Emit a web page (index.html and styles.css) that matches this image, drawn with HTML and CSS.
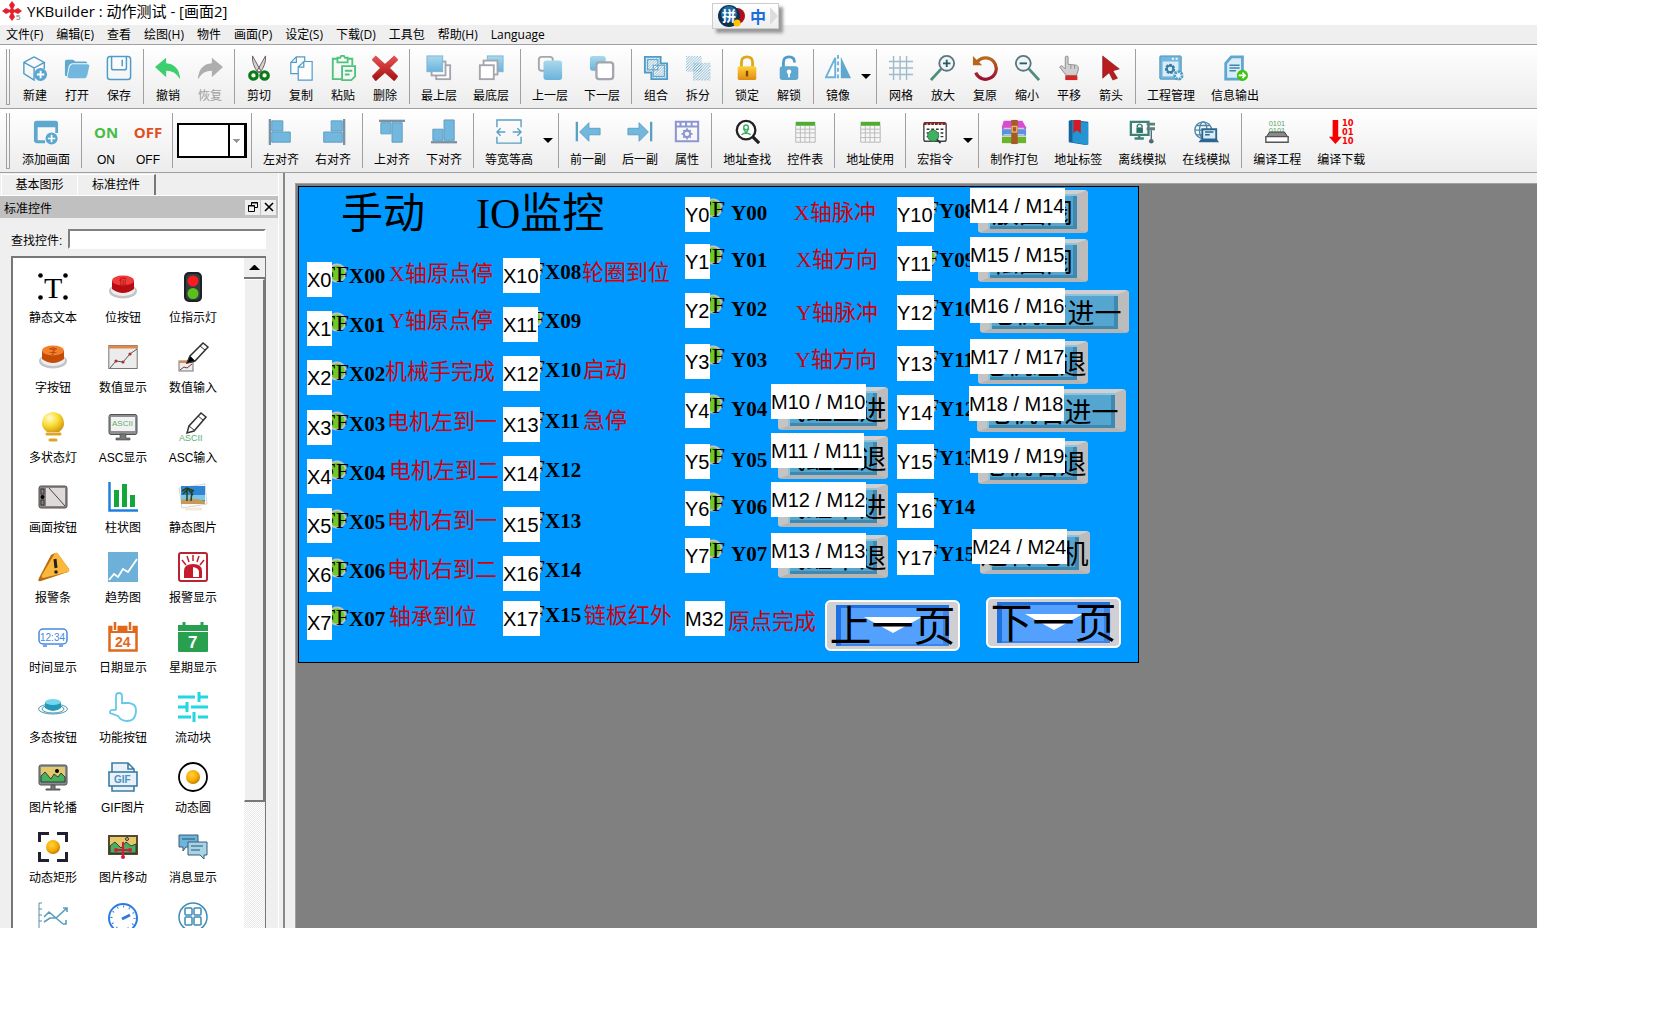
FILE: index.html
```html
<!DOCTYPE html>
<html lang="zh-CN">
<head>
    <meta charset="UTF-8">
    <meta name="viewport" content="width=device-width, initial-scale=1.0">
    <title>YKBuilder : 动作测试 - [画面2]</title>
    <link rel="stylesheet" href="styles.css">
</head>
<body>
    <!-- shared gradients for the icons -->
    <svg class="defs" width="0" height="0" aria-hidden="true">
        <defs>
            <linearGradient id="gBlue" x1="0" y1="0" x2="0" y2="1"><stop offset="0" stop-color="#a9d9ec"/><stop offset="1" stop-color="#6ab2dc"/></linearGradient>
            <linearGradient id="gGold" x1="0" y1="0" x2="0" y2="1"><stop offset="0" stop-color="#ffd23c"/><stop offset="1" stop-color="#e08a10"/></linearGradient>
            <linearGradient id="gRed" x1="0" y1="0" x2="0" y2="1"><stop offset="0" stop-color="#ee5050"/><stop offset="1" stop-color="#a01010"/></linearGradient>
            <linearGradient id="gUndo" x1="0" y1="0" x2="0" y2="1"><stop offset="0" stop-color="#b86a1c"/><stop offset="1" stop-color="#9a1030"/></linearGradient>
            <radialGradient id="gBall" cx=".4" cy=".35" r=".7"><stop offset="0" stop-color="#ffd040"/><stop offset=".6" stop-color="#f8ac00"/><stop offset="1" stop-color="#b87400"/></radialGradient>
            <radialGradient id="gBulb" cx=".35" cy=".3" r=".8"><stop offset="0" stop-color="#fffbd0"/><stop offset=".5" stop-color="#f8dc30"/><stop offset="1" stop-color="#d09010"/></radialGradient>
            <pattern id="hatch" width="3" height="3" patternUnits="userSpaceOnUse"><path d="M0 3L3 0" stroke="#5a9fc4" stroke-width=".8"/></pattern>
        </defs>
    </svg>

    <div class="app">
        <header class="titlebar">
            <svg width="20" height="20" viewBox="0 0 20 20"><g fill="#e8202c"><path d="M10 0l3 4-2 4H9L7 4zM10 20l3-4-2-4H9l-2 4zM0 10l4-3 4 2v2l-4 2zM20 10l-4-3-4 2v2l4 2z"/><circle cx="10" cy="10" r="2.500"/></g><text x="14" y="19" font-size="8" fill="#777">5</text></svg>
            <h1>YKBuilder : 动作测试 - [画面2]</h1>
            <div class="ime">
                <svg width="28" height="24" viewBox="0 0 28 24"><circle cx="19" cy="12" r="8" fill="#b00c1c"/><circle cx="11" cy="12" r="11" fill="#12304e"/><circle cx="11" cy="10" r="8" fill="#1d6ca4"/><text x="4" y="17" font-size="14" font-weight="bold" fill="#fff">拼</text><circle cx="19" cy="19" r="3.500" fill="#ffc400"/></svg>
                <span class="ime-mode">中</span>
                <span class="ime-end"></span>
            </div>
        </header>

        <nav class="menubar">
            <a href="#">文件(F)</a>
            <a href="#">编辑(E)</a>
            <a href="#">查看</a>
            <a href="#">绘图(H)</a>
            <a href="#">物件</a>
            <a href="#">画面(P)</a>
            <a href="#">设定(S)</a>
            <a href="#">下载(D)</a>
            <a href="#">工具包</a>
            <a href="#">帮助(H)</a>
            <a href="#">Language</a>
        </nav>

        <div class="toolbar">
            <span class="grip"></span>
            <button class="tool"><svg viewBox="0 0 28 28"><g fill="none" stroke="#4f9cc8" stroke-width="1.500"><path d="M13 2L2 8v12l11 7V14L2 8M13 14l11-6L13 2M24 8v7"/></g><circle cx="20" cy="21" r="7" fill="#5aa6d0"/><path d="M20 17v8M16 21h8" stroke="#fff" stroke-width="2"/></svg>新建</button>
            <button class="tool"><svg viewBox="0 0 28 28"><path d="M1 7q0-2 2-2h7l2 2h11q2 0 2 2H9q-3 0-4 3L3 23q-2 0-2-2z" fill="#5ea7cf"/><path d="M9 10h16q3 0 2 3l-2 9q-1 3-3 3H6q-3 0-2-3l2-9q1-3 3-3z" fill="#72b7de"/></svg>打开</button>
            <button class="tool"><svg viewBox="0 0 28 28"><g fill="none" stroke="#4f9cc8" stroke-width="1.600"><rect x="1.500" y="1.500" width="25" height="25" rx="3"/><path d="M6 2v12q0 2 2 2h12q2 0 2-2V2M17.500 5v7"/></g></svg>保存</button>
            <span class="sep"></span>
            <button class="tool"><svg viewBox="0 0 28 28"><path d="M0 13L12 3v6q14 1 15 17Q22 17 12 17v7z" fill="#3ccf70"/></svg>撤销</button>
            <button class="tool" disabled><svg viewBox="0 0 28 28"><path d="M28 13L16 3v6Q2 10 1 26 6 17 16 17v7z" fill="#aeaeae"/></svg>恢复</button>
            <span class="sep"></span>
            <button class="tool"><svg viewBox="0 0 28 28"><path d="M7 1l9 16-3 2Q6 10 7 1zM21 1l-9 16 3 2q7-9 6-18z" fill="#d8d0d0" stroke="#665a5a"/><g fill="none" stroke="#0c7a18" stroke-width="3.400"><circle cx="8" cy="22" r="4"/><circle cx="20" cy="22" r="4"/></g></svg>剪切</button>
            <button class="tool"><svg viewBox="0 0 28 28"><g fill="#fbfdfe" stroke="#4f9cc8" stroke-width="1.300"><path d="M9 2h9v18H3V8zM9 2v6H3"/><path d="M17 7h9v20H11V13zM17 7v6h-6"/></g></svg>复制</button>
            <button class="tool"><svg viewBox="0 0 28 28"><g fill="none" stroke="#4dc47a" stroke-width="2"><path d="M8 4H3v22h9M19 4h5v7M8 3h3l1-2h3l1 2h3v5H8z"/><path d="M13 12h14v11l-4 4H13zM16 17h8M16 21h5"/></g></svg>粘贴</button>
            <button class="tool"><svg viewBox="0 0 28 28"><path d="M4 1l10 9L24 1l4 4-9 9 9 9-4 5-10-9-10 9-4-5 9-9-9-9z" fill="url(#gRed)" stroke="#a82020" stroke-width=".6"/></svg>删除</button>
            <span class="sep"></span>
            <button class="tool"><svg viewBox="0 0 28 28"><g fill="#fff" stroke="#a5a5ad" stroke-width="2"><rect x="11" y="11" width="15" height="15"/><rect x="6" y="7" width="15" height="15"/></g><rect x="1" y="1" width="17" height="17" fill="url(#gBlue)" stroke="#7ab6d6"/></svg>最上层</button>
            <button class="tool"><svg viewBox="0 0 28 28"><rect x="10" y="1" width="17" height="17" fill="url(#gBlue)" stroke="#7ab6d6"/><g fill="#fff" stroke="#a5a5ad" stroke-width="2"><rect x="6" y="6" width="15" height="15"/><rect x="2" y="11" width="15" height="15"/></g></svg>最底层</button>
            <span class="sep"></span>
            <button class="tool"><svg viewBox="0 0 28 28"><rect x="2" y="2" width="15" height="15" rx="3" fill="none" stroke="#a5a5ad" stroke-width="2"/><rect x="7" y="6" width="20" height="21" rx="3" fill="url(#gBlue)"/></svg>上一层</button>
            <button class="tool"><svg viewBox="0 0 28 28"><rect x="1" y="1" width="17" height="16" rx="3" fill="url(#gBlue)"/><rect x="8" y="8" width="18" height="18" rx="3" fill="#fff" stroke="#a5a5ad" stroke-width="2.500"/></svg>下一层</button>
            <span class="sep"></span>
            <button class="tool"><svg viewBox="0 0 28 28"><path d="M2 2h17v7h7v17H9v-7H2z" fill="url(#hatch)" stroke="#4f9cc8" stroke-width="2"/><rect x="5" y="5" width="11" height="11" fill="none" stroke="#4f9cc8"/><rect x="11" y="11" width="12" height="12" fill="none" stroke="#4f9cc8"/></svg>组合</button>
            <button class="tool"><svg viewBox="0 0 28 28"><path d="M1 1h17v17H1z" fill="url(#hatch)"/><path d="M9 9h18v18H9z" fill="url(#hatch)" stroke="#a9ccdf" stroke-dasharray="2 2"/></svg>拆分</button>
            <span class="sep"></span>
            <button class="tool"><svg viewBox="0 0 28 28"><path d="M8 13V8q0-6 6-6t6 6v5" fill="none" stroke="#e0a818" stroke-width="3"/><rect x="4" y="12" width="20" height="15" rx="2" fill="url(#gGold)"/><path d="M14 17v6" stroke="#7a4800" stroke-width="2.500"/></svg>锁定</button>
            <button class="tool"><svg viewBox="0 0 28 28"><path d="M8 13V8q0-6 6-6t6 6" fill="none" stroke="#4f9cc8" stroke-width="3"/><rect x="4" y="12" width="20" height="15" rx="3" fill="#5ea7cf"/><circle cx="14" cy="18" r="2.500" fill="#fff"/><path d="M14 18v6" stroke="#fff" stroke-width="2"/></svg>解锁</button>
            <span class="sep"></span>
            <button class="tool"><svg viewBox="0 0 28 28"><path d="M11 3v21H1z" fill="#fff" stroke="#6ab2dc" stroke-width="2"/><path d="M17 2v23h11z" fill="#5ea7cf"/><path d="M14 0v28" stroke="#6ab2dc" stroke-width="2" stroke-dasharray="4 3"/></svg>镜像</button>
            <button class="drop" aria-label="镜像选项"></button>
            <span class="sep"></span>
            <button class="tool"><svg viewBox="0 0 28 28"><path d="M6 1v26M13 1v26M20 1v26M1 7h26M1 14h26M1 21h26" stroke="#9dbccb" stroke-width="1.500"/></svg>网格</button>
            <button class="tool"><svg viewBox="0 0 28 28"><path d="M1 27l11-12" stroke="#4f8d7d" stroke-width="3"/><circle cx="18" cy="9" r="8" fill="#eef6f8" stroke="#5a7482" stroke-width="2"/><path d="M18 5v8M14 9h8" stroke="#2d5a5a" stroke-width="2"/></svg>放大</button>
            <button class="tool"><svg viewBox="0 0 28 28"><path d="M6 7A11.500 11.500 0 1 1 4 19" fill="none" stroke="url(#gUndo)" stroke-width="3.500"/><path d="M1 1v10h10z" fill="#b8661c"/></svg>复原</button>
            <button class="tool"><svg viewBox="0 0 28 28"><path d="M27 27L16 15" stroke="#4f8d7d" stroke-width="3"/><circle cx="10" cy="9" r="8" fill="#eef6f8" stroke="#5a7482" stroke-width="2"/><path d="M6 9h8" stroke="#2d5a5a" stroke-width="2"/></svg>缩小</button>
            <button class="tool"><svg viewBox="0 0 28 28"><path d="M10 2q2-2 3 0v8l9 1q3 1 2 5l-2 6H11L4 13q1-2 3-1l3 3z" fill="#cfcfcf" stroke="#8a8a8a"/><path d="M16 11v4M20 11v4" stroke="#8a8a8a"/><rect x="10" y="22" width="13" height="5" fill="#d42828"/></svg>平移</button>
            <button class="tool"><svg viewBox="0 0 28 28"><path d="M5 1l18 14-7 2 5 8-5 2-4-8-7 6z" fill="#b81c1c" stroke="#7a1010" stroke-width=".6"/></svg>箭头</button>
            <span class="sep"></span>
            <button class="tool"><svg viewBox="0 0 28 28"><rect x="2" y="1" width="23" height="25" rx="1" fill="#72b7de" stroke="#4f8fb4"/><rect x="5" y="7" width="17" height="16" fill="#d8edf7"/><circle cx="13" cy="15" r="4" fill="none" stroke="#3b7ca4" stroke-width="3" stroke-dasharray="2.500 1"/><circle cx="13" cy="15" r="3.500" fill="none" stroke="#3b7ca4" stroke-width="2"/><circle cx="22" cy="22" r="4" fill="#e8f4fa" stroke="#4f9cc8" stroke-width="3" stroke-dasharray="2.500 1"/><path d="M15 4h2M19 4h2" stroke="#fff" stroke-width="2"/></svg>工程管理</button>
            <button class="tool"><svg viewBox="0 0 28 28"><path d="M10 2h12v24H4V9z" fill="#d8edf7" stroke="#5ea7cf" stroke-width="3"/><path d="M8 11h11M8 14h11M8 17h7" stroke="#4584ac" stroke-width="1.500"/><circle cx="22" cy="22" r="6" fill="#3fc410"/><path d="M18 22h7M22 19l3 3-3 3" fill="none" stroke="#fff" stroke-width="1.800"/></svg>信息输出</button>
        </div>

        <div class="toolbar">
            <span class="grip"></span>
            <button class="tool"><svg viewBox="0 0 28 28"><path d="M1 5q0-3 3-3h20q3 0 3 3v10h-3V9H5v14h8v3H4q-3 0-3-3z" fill="#5ea7cf"/><circle cx="20" cy="21" r="6.500" fill="#5aa6d0"/><path d="M20 17v8M16 21h8" stroke="#fff" stroke-width="1.800"/></svg>添加画面</button>
            <span class="sep"></span>
            <button class="tool"><b class="word on">ON</b>ON</button>
            <button class="tool"><b class="word off">OFF</b>OFF</button>
            <span class="sep"></span>
            <select class="state" aria-label="状态"><option></option></select>
            <span class="sep"></span>
            <button class="tool"><svg viewBox="0 0 28 28"><path d="M2 0v28" stroke="#7a93a3" stroke-width="2.500"/><path d="M4 2h12v11H4zM4 14h20v11H4z" fill="#72b7de" stroke="#5f9cc0"/></svg>左对齐</button>
            <button class="tool"><svg viewBox="0 0 28 28"><path d="M26 0v28" stroke="#7a93a3" stroke-width="2.500"/><path d="M12 2h12v11H12zM4 14h20v11H4z" fill="#72b7de" stroke="#5f9cc0"/></svg>右对齐</button>
            <span class="sep"></span>
            <button class="tool"><svg viewBox="0 0 28 28"><path d="M0 2h28" stroke="#7a93a3" stroke-width="2.500"/><path d="M2 4h11v12H2zM14 4h11v21H14z" fill="#72b7de" stroke="#5f9cc0"/></svg>上对齐</button>
            <button class="tool"><svg viewBox="0 0 28 28"><path d="M0 25h28" stroke="#7a93a3" stroke-width="2.500"/><path d="M2 11h11v12H2zM14 1h11v22H14z" fill="#72b7de" stroke="#5f9cc0"/></svg>下对齐</button>
            <span class="sep"></span>
            <button class="tool"><svg viewBox="0 0 28 28"><g fill="none" stroke="#5a9fc4" stroke-width="1.500"><path d="M1 9V1h26v8M1 19v7h26v-7M1 14h9M18 14h9M5 10l-4 4 4 4M23 10l4 4-4 4"/></g></svg>等宽等高</button>
            <button class="drop" aria-label="等宽等高选项"></button>
            <span class="sep"></span>
            <button class="tool"><svg viewBox="0 0 28 28"><path d="M2 3v21" stroke="#5a9fc4" stroke-width="2.500"/><path d="M5 14l10-10v6h12v7H15v7z" fill="#72b7de" stroke="#5a9fc4"/></svg>前一副</button>
            <button class="tool"><svg viewBox="0 0 28 28"><path d="M26 3v21" stroke="#5a9fc4" stroke-width="2.500"/><path d="M23 14L13 4v6H1v7h12v7z" fill="#72b7de" stroke="#5a9fc4"/></svg>后一副</button>
            <button class="tool"><svg viewBox="0 0 28 28"><g fill="none" stroke="#8d96cf" stroke-width="2.200"><path d="M2 3h24v21H2zM2 8h24M7 3v5M13 3v5M19 3v5"/><circle cx="14" cy="16" r="3.500"/><path d="M14 10v3M14 19v3M8 16h3M17 16h3M10 12l2 2M18 20l-2-2M18 12l-2 2M10 20l2-2" stroke-width="1.800"/></g></svg>属性</button>
            <span class="sep"></span>
            <button class="tool"><svg viewBox="0 0 28 28"><circle cx="13" cy="12" r="10" fill="#fff" stroke="#222" stroke-width="2.500"/><path d="M20 19l7 7" stroke="#222" stroke-width="3.500"/><circle cx="13" cy="9" r="2.500" fill="none" stroke="#3fae62" stroke-width="1.500"/><path d="M10 10l3 5 3-5M8 17q5-4 10 0" fill="none" stroke="#3fae62" stroke-width="1.500"/></svg>地址查找</button>
            <button class="tool"><svg viewBox="0 0 28 28"><path d="M4 7h21v18H4z" fill="#f6f6f6" stroke="#b5b5b5"/><path d="M4 11h21M4 15h21M4 20h21M9 7v18M14 7v18M19 7v18" stroke="#b9b9b9"/><path d="M4 3h21v4H4z" fill="#4cae2c"/></svg>控件表</button>
            <span class="sep"></span>
            <button class="tool"><svg viewBox="0 0 28 28"><path d="M4 7h21v18H4z" fill="#f6f6f6" stroke="#b5b5b5"/><path d="M4 11h21M4 15h21M4 20h21M9 7v18M14 7v18M19 7v18" stroke="#b9b9b9"/><path d="M4 3h21v4H4z" fill="#4cae2c"/></svg>地址使用</button>
            <span class="sep"></span>
            <button class="tool"><svg viewBox="0 0 28 28"><rect x="2" y="4" width="24" height="20" rx="2" fill="#fff" stroke="#444" stroke-width="1.500"/><path d="M2 5h24" stroke="#8a2020" stroke-width="3" stroke-dasharray="3 1"/><path d="M5 11h18M5 15h18M5 19h18" stroke="#333" stroke-width="1.500" stroke-dasharray="3 2"/><circle cx="12" cy="18" r="6" fill="#41b062" stroke="#2e7d46"/><path d="M16 22l4 4" stroke="#333" stroke-width="2"/></svg>宏指令</button>
            <button class="drop" aria-label="宏指令选项"></button>
            <span class="sep"></span>
            <button class="tool"><svg viewBox="0 0 28 28"><path d="M3 2h20l4 7v2H1V8z" fill="#d44fd0"/><path d="M1 11h26v7H1z" fill="#5a93dc"/><path d="M1 19h26v7H1z" fill="#6cb42c"/><path d="M3 10h22M3 17h22" stroke="#f5e0f5"/><path d="M11 1h7v26h-7z" fill="#a65a28"/><rect x="12" y="8" width="5" height="6" fill="none" stroke="#e8b860" stroke-width="1.500"/></svg>制作打包</button>
            <button class="tool"><svg viewBox="0 0 28 28"><path d="M4 2l3-1 18 2v24l-3 1L4 25z" fill="#15639c"/><path d="M8 2l17 2v24L8 25z" fill="#2494d2"/><path d="M9 1h8v15l-4-4-4 3z" fill="#d21c24"/></svg>地址标签</button>
            <button class="tool"><svg viewBox="0 0 28 28"><path d="M2 3h19v14H2zM11 17v4M6 21h10" fill="none" stroke="#3f8275" stroke-width="2.500"/><rect x="8" y="9" width="7" height="6" fill="#2f7366"/><path d="M9 9V7q2-3 5 0v2" fill="none" stroke="#2f7366" stroke-width="1.500"/><path d="M19 4h9v3h-9zM19 9h9v3h-9z" fill="#5d7f80"/><path d="M24 12v10" stroke="#567" stroke-width="1.500"/><circle cx="24" cy="24" r="2.500" fill="#567"/></svg>离线模拟</button>
            <button class="tool"><svg viewBox="0 0 28 28"><g fill="none" stroke="#4a86aa" stroke-width="1.400"><circle cx="11" cy="12" r="9"/><ellipse cx="11" cy="12" rx="4" ry="9"/><path d="M2 12h18M4 7h14M4 17h14"/></g><path d="M10 11h15v11H10z" fill="#d9ecf5" stroke="#2c6690" stroke-width="2"/><path d="M13 14h9M13 17h5" stroke="#2c6690" stroke-width="1.500"/><path d="M8 22h18l2 3H6z" fill="#2c6690"/></svg>在线模拟</button>
            <span class="sep"></span>
            <button class="tool"><svg viewBox="0 0 28 28"><g font-size="8" fill="#55a866"><text x="5" y="8">0101</text><text x="5" y="15">0101</text></g><path d="M6 14h16l4 6H2z" fill="#8a8a8a" stroke="#333"/><path d="M2 19h24v6H2z" fill="#fff" stroke="#555" stroke-width="1.500"/></svg>编译工程</button>
            <button class="tool"><svg viewBox="0 0 28 28"><path d="M5 1h6v18h4L8 27 1 19h4z" fill="#f80000"/><g class="bits" font-size="9" fill="#f80000"><text x="15" y="8">10</text><text x="15" y="17">01</text><text x="15" y="27">10</text></g></svg>编译下载</button>
        </div>

        <main class="workspace">
            <aside class="dock">
                <div class="tabs">
                    <button class="tab">基本图形</button>
                    <button class="tab active">标准控件</button>
                </div>
                <div class="dock-title">
                    <h2>标准控件</h2>
                    <button aria-label="浮动"><svg width="10" height="10" viewBox="0 0 10 10" fill="none" stroke="#000"><path d="M3.500 3V.5h6v5H7M3 1h7"/><path d="M.5 3.500h6v6h-6zM0 4h7"/></svg></button>
                    <button aria-label="关闭"><svg width="10" height="10" viewBox="0 0 10 10" stroke="#000" stroke-width="1.600"><path d="M1 1l8 8M9 1L1 9"/></svg></button>
                </div>
                <div class="search">
                    <label for="find">查找控件:</label>
                    <input id="find" type="text">
                </div>
                <div class="list">
                    <div class="palette">
                        <button><svg viewBox="0 0 30 30"><text class="serif" x="6" y="26" font-size="30">T</text><circle cx="2.500" cy="3.500" r="2.300"/><circle cx="27.500" cy="3.500" r="2.300"/><circle cx="2.500" cy="25.500" r="2.300"/><circle cx="27.500" cy="25.500" r="2.300"/></svg>静态文本</button>
                        <button><svg viewBox="0 0 30 30"><ellipse cx="15" cy="19" rx="14" ry="7.500" fill="#c4c4c8"/><ellipse cx="15" cy="18" rx="12" ry="6" fill="#eee"/><path d="M4 9v8q11 8 22 0V9z" fill="#b80c14"/><ellipse cx="15" cy="8.500" rx="11" ry="5" fill="#ee3c3c"/><text x="11" y="12" font-size="8" fill="#a00">位</text></svg>位按钮</button>
                        <button><svg viewBox="0 0 30 30"><rect x="6" y="0" width="18" height="30" rx="5" fill="#1a2226"/><rect x="8" y="2" width="14" height="26" rx="4" fill="#323c42"/><circle cx="15" cy="9" r="5.500" fill="#f81c1c"/><circle cx="15" cy="21.500" r="5.500" fill="#5cc01c"/></svg>位指示灯</button>
                        <button><svg viewBox="0 0 30 30"><ellipse cx="15" cy="19" rx="14" ry="7.500" fill="#c4c4c8"/><ellipse cx="15" cy="18" rx="12" ry="6" fill="#eee"/><path d="M4 9v8q11 8 22 0V9z" fill="#c44c08"/><ellipse cx="15" cy="8.500" rx="11" ry="5" fill="#f4802c"/><text x="11" y="12" font-size="8" fill="#a03000">字</text></svg>字按钮</button>
                        <button><svg viewBox="0 0 30 30"><rect x=".8" y="3.500" width="28.400" height="23" fill="#ececec" stroke="#777"/><path d="M1 5h28" stroke="#e08848" stroke-width="3"/><path d="M2 26l6-7 7 1 7-8 7-5" fill="none" stroke="#555"/><g fill="#a33"><circle cx="8" cy="19" r="1.600"/><circle cx="15" cy="20" r="1.600"/><circle cx="22" cy="12" r="1.600"/></g></svg>数值显示</button>
                        <button><svg viewBox="0 0 30 30"><rect x="1" y="19" width="14" height="10" fill="#ececec" stroke="#777"/><path d="M1 20h14" stroke="#e08848" stroke-width="2"/><path d="M2 28l4-3 3 1 5-4" fill="none" stroke="#733"/><path d="M9 21l3-7L25 1l5 4-13 14z" fill="#fff" stroke="#333" stroke-width="1.500"/><path d="M9 21l3-7 5 5zM22 4l5 4" stroke="#333"/></svg>数值输入</button>
                        <button><svg viewBox="0 0 30 30"><path d="M15 0q11 1 11 12 0 4-5 8H9q-5-4-5-8Q4 1 15 0z" fill="url(#gBulb)"/><path d="M9 22h13M12 28h6" stroke="#dfa428" stroke-width="3" stroke-linecap="round"/></svg>多状态灯</button>
                        <button><svg viewBox="0 0 30 30"><rect x="1" y="2.500" width="28" height="20" rx="2" fill="#8c9092" stroke="#4e5254"/><rect x="3" y="5" width="24" height="14" fill="#f2f2f2"/><text x="4" y="14" font-size="8" fill="#5aae70">ASCII</text><path d="M12 22h6v4h4v2H8v-2h4z" fill="#777" stroke="#444" stroke-width=".6"/></svg>ASC显示</button>
                        <button><svg viewBox="0 0 30 30"><path d="M9 21l2-7L23 1l5 4-12 14z" fill="#fff" stroke="#333" stroke-width="1.500"/><path d="M11 14l5 4M20 4l5 4" stroke="#333"/><text x="1" y="29" font-size="9" fill="#5aae70">ASCII</text></svg>ASC输入</button>
                        <button><svg viewBox="0 0 30 30"><rect x="1" y="4" width="28" height="22" rx="2" fill="#8a8484" stroke="#55504f"/><rect x="8" y="6" width="19" height="18" fill="#dedada"/><path d="M11 6l16 18" stroke="#444"/><rect x="3" y="7" width="3" height="5" fill="none" stroke="#333"/><circle cx="4.500" cy="15" r="2"/><rect x="3" y="18" width="3" height="5" fill="none" stroke="#333"/></svg>画面按钮</button>
                        <button><svg viewBox="0 0 30 30"><path d="M1.500 0v28.500H30" fill="none" stroke="#2080e0" stroke-width="2.500"/><path d="M6 8h5v17H6zM14 2h5v23h-5zM22 13h5v12h-5z" fill="#14a83a"/></svg>柱状图</button>
                        <button><svg viewBox="0 0 30 30"><path d="M1 6l26-4 2 20-25 4z" fill="#fafafa" stroke="#ccc" stroke-width=".8"/><rect x="3" y="4" width="24" height="18" fill="#2f86d4"/><path d="M3 13h24v5H3z" fill="#78c8e8"/><path d="M3 18q12-3 24 1v3H3z" fill="#c89858"/><path d="M4 9l5-3 7 3M5 12l5-5 5 6M9 7v12M14 9l-1 10" fill="none" stroke="#28401c" stroke-width="1.500"/><path d="M7 27h17" stroke="#f5ead8" stroke-width="3"/></svg>静态图片</button>
                        <button><svg viewBox="0 0 30 30"><path d="M17 1q2-1 3 1l11 15q1 2-1 3L3 29q-4 1-2-3L13 3z" fill="#b86c10"/><path d="M17 1q2-1 3 1l11 15q1 2-1 3L5 26q-2 0-1-3z" fill="#fbb83c"/><path d="M17 7l1 9" stroke="#222" stroke-width="3"/><circle cx="18" cy="20" r="1.800" fill="#222"/></svg>报警条</button>
                        <button><svg viewBox="0 0 30 30"><rect width="30" height="30" fill="#6db1d8"/><path d="M1 28l5-6 4 3 5-8 5 3 9-13" fill="none" stroke="#fff" stroke-width="1.800"/></svg>趋势图</button>
                        <button><svg viewBox="0 0 30 30"><rect x="1" y="1" width="28" height="28" rx="2" fill="#fff" stroke="#b82434" stroke-width="2"/><path d="M6 26V19q0-7 9-7t9 7v7z" fill="#c41c2c"/><path d="M15 15q6 1 6 5v5h-6z" fill="#fff"/><path d="M15 3v6M9 4l2 6M21 4l-2 6M4 8l4 5M26 8l-4 5" stroke="#c41c2c" stroke-width="1.500"/></svg>报警显示</button>
                        <button><svg viewBox="0 0 30 30"><rect x="1" y="7" width="28" height="15" rx="4" fill="none" stroke="#4888e4" stroke-width="1.500"/><path d="M5 24h4M21 24h4" stroke="#4888e4" stroke-width="1.500"/><text x="2" y="19" font-size="10" fill="#4888e4">12:34</text></svg>时间显示</button>
                        <button><svg viewBox="0 0 30 30"><rect x="1.500" y="5" width="27" height="23.500" fill="#fff" stroke="#e0681c" stroke-width="2.500"/><path d="M1 5h28v6H1z" fill="#e0681c"/><path d="M7 0v9M22 0v9" stroke="#fff" stroke-width="5"/><path d="M7 0v8M22 0v8" stroke="#e0681c" stroke-width="2.500"/><text x="7" y="25" font-size="14" font-weight="bold" fill="#e0681c">24</text></svg>日期显示</button>
                        <button><svg viewBox="0 0 30 30"><path d="M0 3h30v26q0 1-1 1H1q-1 0-1-1z" fill="#28a050"/><path d="M0 9.500h30" stroke="#fff"/><path d="M6 0v5M24 0v5" stroke="#28a050" stroke-width="3"/><text x="10" y="26" font-size="17" font-weight="bold" fill="#fff">7</text></svg>星期显示</button>
                        <button><svg viewBox="0 0 30 30"><g fill="none" stroke="#4a98b0"><ellipse cx="15" cy="17" rx="14.500" ry="5"/><ellipse cx="15" cy="17" rx="11" ry="4"/></g><path d="M7 10v6q8 6 16 0v-6z" fill="#2498b8"/><ellipse cx="15" cy="10" rx="8" ry="3" fill="#74d8ec"/></svg>多态按钮</button>
                        <button><svg viewBox="0 0 30 30"><path d="M8 18V4q0-3 3-3t3 3v7h7q7 1 7 7 0 11-9 11-6 0-9-5l-8-3q-1-4 6-3" fill="none" stroke="#68c8ec" stroke-width="1.800"/></svg>功能按钮</button>
                        <button><svg viewBox="0 0 30 30"><path d="M0 5h17M21 5h9M21 0v10M0 15h9M9 10v10M13 15h17M0 25h13M16 20v10M20 25h10" stroke="#20d8e4" stroke-width="3"/></svg>流动块</button>
                        <button><svg viewBox="0 0 30 30"><rect x="1" y="3" width="28" height="20" rx="2" fill="#888e90" stroke="#4c5052"/><rect x="3" y="5" width="24" height="15" fill="#e4c86c"/><path d="M3 20v-6l4-4 6 7 3-5 4 3 3-4 4 4v5z" fill="#48b060" stroke="#222" stroke-width=".8"/><circle cx="19" cy="9" r="2"/><path d="M13 23h4v4h5v1H8v-1h5z" fill="#777" stroke="#555"/></svg>图片轮播</button>
                        <button><svg viewBox="0 0 30 30"><g fill="#e8f2f8" stroke="#3c7ca4" stroke-width="1.600"><path d="M4 10V1h16l6 6v3M20 1v6h6M4 24v5h22v-5"/><rect x="1" y="10" width="28" height="14"/></g><text x="6" y="21" font-size="10" font-weight="bold" fill="#4a94c4">GIF</text></svg>GIF图片</button>
                        <button><svg viewBox="0 0 30 30"><circle cx="15" cy="15" r="14" fill="#fff" stroke="#000" stroke-width="1.800"/><circle cx="15" cy="15" r="7" fill="url(#gBall)"/></svg>动态圆</button>
                        <button><svg viewBox="0 0 30 30"><path d="M1.500 10V1.500H11M19 1.500h9.500V10M28.500 20v8.500H19M11 28.500H1.500V20" fill="none" stroke="#222030" stroke-width="3"/><circle cx="15" cy="15" r="7" fill="url(#gBall)"/></svg>动态矩形</button>
                        <button><svg viewBox="0 0 30 30"><rect x="1" y="4" width="28" height="18" fill="#e4c86c" stroke="#554a30" stroke-width="2"/><path d="M2 21v-7l5-4 6 6 5-6 5 4 5-2v9z" fill="#48b060" stroke="#222" stroke-width=".8"/><circle cx="19" cy="7" r="1.500" fill="none" stroke="#333"/><path d="M15 10v16M8 18h14" stroke="#d01c3c" stroke-width="2"/><circle cx="15" cy="25" r="2" fill="#d01c3c"/><circle cx="8" cy="18" r="2" fill="#d01c3c"/><circle cx="22" cy="18" r="2" fill="#d01c3c"/></svg>图片移动</button>
                        <button><svg viewBox="0 0 30 30"><path d="M1 3h19v12H8l-3 4v-4H1z" fill="#6cb4dc" stroke="#3a5c74"/><path d="M10 10h19v13h-3v4l-4-4H10z" fill="#a8d4e8" stroke="#3a5c74"/><path d="M4 7h13M13 14h12M13 18h9" stroke="#2c5470"/></svg>消息显示</button>
                        <button aria-label="曲线"><svg viewBox="0 0 30 30"><path d="M1 1v29M1 1h3M1 7h3M1 13h3M1 19h3" stroke="#5a8ca8"/><path d="M6 15l5-5 14 12M6 20l6-4 6 0L29 6M25 6h4v4M25 22l3 0 0-4" fill="none" stroke="#5a9cbc" stroke-width="1.600"/></svg></button>
                        <button aria-label="仪表"><svg viewBox="0 0 30 30"><circle cx="15" cy="16" r="14" fill="none" stroke="#2c7ce0" stroke-width="2"/><circle cx="15" cy="16" r="11.500" fill="none" stroke="#2c7ce0" stroke-width="2" stroke-dasharray="1 5"/><path d="M14 17l8-4" stroke="#2c7ce0" stroke-width="3"/></svg></button>
                        <button aria-label="菜单"><svg viewBox="0 0 30 30"><circle cx="15" cy="15" r="14" fill="none" stroke="#3c8cb4" stroke-width="1.500"/><g fill="none" stroke="#3c8cb4" stroke-width="1.500"><rect x="7" y="6" width="7" height="7" rx="1"/><rect x="16" y="6" width="7" height="7" rx="1"/><rect x="7" y="15" width="7" height="8" rx="1"/><rect x="16" y="15" width="7" height="8" rx="1"/></g></svg></button>
                    </div>
                    <div class="scrollbar">
                        <button class="scroll-up" aria-label="向上滚动"></button>
                        <div class="thumb"></div>
                    </div>
                </div>
            </aside>
            <div class="splitter"></div>
            <section class="mdi">
                <div class="screen" id="screen"></div>
            </section>
        </main>
    </div>

    <script src="screen.js"></script>
</body>
</html>
```

FILE: screen.js
```js
const screenEl = document.getElementById('screen');

// [tag, tag x, tag y, port name]
const ports = [
    ['X0', 8, 75, 'X00'], ['X1', 8, 124, 'X01'], ['X2', 8, 173, 'X02'], ['X3', 8, 223, 'X03'],
    ['X4', 8, 272, 'X04'], ['X5', 8, 321, 'X05'], ['X6', 8, 370, 'X06'], ['X7', 8, 418, 'X07'],
    ['X10', 204, 71, 'X08'], ['X11', 204, 120, 'X09'], ['X12', 204, 169, 'X10'], ['X13', 204, 220, 'X11'],
    ['X14', 204, 269, 'X12'], ['X15', 204, 320, 'X13'], ['X16', 204, 369, 'X14'], ['X17', 204, 414, 'X15'],
    ['Y0', 386, 10, 'Y00'], ['Y1', 386, 57, 'Y01'], ['Y2', 386, 106, 'Y02'], ['Y3', 386, 157, 'Y03'],
    ['Y4', 386, 206, 'Y04'], ['Y5', 386, 257, 'Y05'], ['Y6', 386, 304, 'Y06'], ['Y7', 386, 351, 'Y07'],
    ['Y10', 598, 10, 'Y08'], ['Y11', 598, 59, 'Y09'], ['Y12', 598, 108, 'Y10'], ['Y13', 598, 159, 'Y11'],
    ['Y14', 598, 208, 'Y12'], ['Y15', 598, 257, 'Y13'], ['Y16', 598, 306, 'Y14'], ['Y17', 598, 353, 'Y15']
];

// [text, x, y of the middle]
const notes = [
    ['X轴原点停', 90, 87], ['Y轴原点停', 90, 134], ['机械手完成', 86, 185], ['电机左到一', 88, 235],
    ['电机左到二', 90, 284], ['电机右到一', 88, 334], ['电机右到二', 88, 383], ['轴承到位', 90, 430],
    ['轮圈到位', 283, 86], ['启动', 284, 183], ['急停', 284, 234], ['链板红外', 285, 429],
    ['X轴脉冲', 495, 26], ['X轴方向', 497, 73], ['Y轴脉冲', 497, 126], ['Y轴方向', 496, 173],
    ['原点完成', 429, 435]
];

// [text, x, y, width, tag, tag x, tag y]
const keys = [
    ['气缸上进', 479, 200, 110, 'M10', 472, 197],
    ['气缸上退', 479, 249, 110, 'M11', 472, 246],
    ['气缸下进', 479, 297, 110, 'M12', 472, 295],
    ['气缸下退', 479, 348, 110, 'M13', 472, 346],
    ['放圈阀', 679, 3, 110, 'M14', 671, 1],
    ['松圈阀', 679, 52, 110, 'M15', 671, 50],
    ['电机左进一', 681, 103, 149, 'M16', 671, 101],
    ['电机左退', 679, 154, 110, 'M17', 671, 152],
    ['电机右进一', 678, 202, 149, 'M18', 670, 199],
    ['电机右退', 679, 254, 110, 'M19', 671, 251],
    ['运转电机', 681, 344, 110, 'M24', 673, 342]
];

function add(tag, className, text, x, y) {
    const el = document.createElement(tag);
    el.className = className;
    el.textContent = text;
    el.style.left = x + 'px';
    el.style.top = y + 'px';
    screenEl.appendChild(el);
    return el;
}

add('h3', 'heading', '手动', 42, 0);
add('h3', 'heading', 'IO监控', 177, 0);

ports.forEach(([tag, x, y, name]) => {
    const isOutput = x === 386;
    add('span', 'lamp', 'FF', isOutput ? x + 10 : x + 12, y + 1);
    add('span', 'port', name, isOutput ? x + 46 : x + 42, isOutput ? y + 3 : y + 1);
    add('span', 'tag', tag, x, y);
});

notes.forEach(([text, x, y]) => add('span', 'note', text, x, y - 14));

keys.forEach(([text, x, y, width, tag, tx, ty]) => {
    add('button', 'key', text, x, y).style.width = width + 'px';
    add('span', 'tag', tag + ' / ' + tag, tx, ty);
});

add('span', 'tag', 'M32', 386, 414);
add('button', 'page-key', '上一页', 526, 413);
add('button', 'page-key', '下一页', 687, 410);
```

FILE: styles.css
```css
* {
    box-sizing: border-box;
}

body {
    margin: 0;
    padding: 0 8% 0 0;
    background: #fff;
    color: #000;
    font-family: "Liberation Sans", "Noto Sans CJK SC", sans-serif;
    font-size: 12px;
}

button {
    margin: 0;
    padding: 0;
    border: none;
    background: none;
    color: inherit;
    font: inherit;
    white-space: nowrap;
}

h1, h2, h3 {
    margin: 0;
    font-weight: normal;
}

.defs {
    position: absolute;
}

.app {
    display: flex;
    flex-direction: column;
    height: calc(100vh - 107px);
    margin-right: -2px;
    background: #efefef;
}

/* title bar and menu */
.titlebar {
    position: relative;
    display: flex;
    align-items: center;
    flex: none;
    height: 25px;
    padding: 0 2px 4px;
    gap: 5px;
    background: #fff;
}

.titlebar h1 {
    font-family: "Open Sans", "Noto Sans CJK SC", sans-serif;
    font-size: 15px;
    line-height: 20px;
}

.ime {
    position: absolute;
    z-index: 2;
    left: 712px;
    top: 3px;
    display: flex;
    align-items: center;
    gap: 4px;
    height: 26px;
    padding-left: 5px;
    border: 1px solid #ccc;
    background: linear-gradient(#fff, #eee);
    box-shadow: 4px 4px 3px #999;
}

.ime-mode {
    color: #1c6ce0;
    font-size: 16px;
    font-weight: bold;
}

.ime-end {
    width: 8px;
    height: 18px;
    background: #ddd;
    clip-path: polygon(0 0, 100% 50%, 0 100%);
}

.menubar {
    display: flex;
    align-items: center;
    flex: none;
    gap: 13px;
    height: 20px;
    padding: 0 6px;
    border-bottom: 1px solid #a0a0a0;
    font-family: "Open Sans", "Noto Sans CJK SC", sans-serif;
    line-height: 18px;
}

.menubar a {
    color: #000;
    text-decoration: none;
}

/* toolbars */
.toolbar {
    display: flex;
    flex: none;
    height: 64px;
    border-bottom: 1px solid #a0a0a0;
    background: linear-gradient(#fff, #ececec);
}

.grip {
    width: 4px;
    margin: 4px 4px 3px 6px;
    border: 1px solid #a0a0a0;
    border-top: none;
}

.tool {
    display: flex;
    flex-direction: column;
    align-items: center;
    gap: 7px;
    padding: 10px 8px 0;
    line-height: 16px;
}

.tool:disabled {
    color: #a0a0a0;
}

.tool svg {
    width: 26px;
    height: 26px;
}

.bits {
    font-family: "DejaVu Sans", sans-serif;
    font-weight: bold;
}

.sep {
    width: 1px;
    margin: 4px 3px;
    background: #a0a0a0;
}

.drop {
    width: 14px;
}

.drop::before {
    content: "";
    display: block;
    margin: 0 2px;
    border: 5px solid transparent;
    border-top-color: #000;
    border-bottom: none;
}

.word {
    display: flex;
    justify-content: center;
    width: 26px;
    height: 26px;
    font-family: "Open Sans", sans-serif;
    font-size: 15px;
    font-weight: bold;
    line-height: 26px;
}

.on {
    color: #48bc48;
}

.off {
    color: #e0501c;
}

.state {
    width: 70px;
    height: 35px;
    margin: 14px 1px;
    border: 2px solid #000;
    border-width: 2px 3px 2px 2px;
    border-radius: 0;
    appearance: none;
    background:
        linear-gradient(#000, #000) right 14px top / 2px 100% no-repeat,
        linear-gradient(135deg, #999 50%, transparent 50%) right 3px center / 4px 4px no-repeat,
        linear-gradient(225deg, #999 50%, transparent 50%) right 7px center / 4px 4px no-repeat,
        #fff;
}

/* left dock */
.workspace {
    display: flex;
    flex: 1;
    min-height: 0;
}

.dock {
    display: flex;
    flex-direction: column;
    flex: none;
    width: 279px;
    border-right: 1px solid #fff;
}

.tabs {
    display: flex;
    padding: 1px 0 0 1px;
    margin-right: 1px;
    border-bottom: 1px solid #fff;
}

.tab {
    width: 76px;
    height: 21px;
    border-top: 1px solid #fff;
    border-left: 1px solid #fff;
    line-height: 20px;
}

.tab.active {
    width: 79px;
    border-right: 2px solid #777;
}

.dock-title {
    display: flex;
    align-items: center;
    gap: 1px;
    height: 22px;
    padding: 0 2px 0 4px;
    background: #c0c0c0;
}

.dock-title h2 {
    flex: 1;
    font-size: 12px;
}

.dock-title button {
    width: 15px;
    height: 15px;
    background: #efefef;
    line-height: 10px;
}

.search {
    display: flex;
    align-items: center;
    gap: 6px;
    padding: 11px 12px 7px 11px;
}

.search input {
    flex: 1;
    min-width: 0;
    height: 20px;
    border: 2px solid;
    border-color: #808080 #fff #fff #808080;
    background: #fff;
}

.list {
    display: flex;
    flex: 1;
    min-height: 0;
    margin: 0 12px 0 11px;
    border: 2px solid #777;
    border-width: 2px 1px 0 2px;
    background: #fff;
}

.palette {
    display: grid;
    grid-template-columns: repeat(3, 70px);
    grid-auto-rows: 70px;
    flex: 1;
    padding: 7px 5px 0;
    overflow: hidden;
}

.palette button {
    display: flex;
    flex-direction: column;
    align-items: center;
    gap: 8px;
    padding-top: 7px;
    line-height: 16px;
}

.palette svg {
    width: 30px;
    height: 30px;
    overflow: visible;
}

.serif {
    font-family: "Liberation Serif", serif;
}

.scrollbar {
    display: flex;
    flex-direction: column;
    flex: none;
    width: 21px;
    background: repeating-conic-gradient(#e8e8e8 0 25%, #fff 0 50%) 0 0 / 2px 2px;
}

.scroll-up {
    height: 21px;
    border-bottom: 2px solid #777;
    background: #efefef;
}

.scroll-up::before {
    content: "";
    display: block;
    margin: 0 5px;
    border: 5px solid transparent;
    border-bottom-color: #000;
    border-top: none;
}

.thumb {
    height: 78%;
    border: 1px solid #fff;
    border-right: 2px solid #777;
    border-bottom: 2px solid #777;
    background: #efefef;
}

.splitter {
    flex: none;
    width: 6px;
    border-right: 2px solid #888;
}

/* drawing area */
.mdi {
    flex: 1;
    min-width: 0;
    margin: 10px 0 0 10px;
    padding: 2px;
    border: 1px solid #a0a0a0;
    border-width: 1px 0 0 1px;
    background: #808080;
    overflow: hidden;
}

.screen {
    position: relative;
    width: 841px;
    height: 477px;
    border: 1px solid #000;
    background: #09f;
    font-family: "Liberation Serif", "Noto Sans CJK SC", serif;
}

.screen > * {
    position: absolute;
    white-space: pre;
}

.heading {
    font-size: 42px;
    line-height: 54px;
}

.port {
    font-size: 21px;
    font-weight: bold;
    line-height: 26px;
}

.note {
    color: #d0000c;
    font-size: 22px;
    line-height: 28px;
}

.tag {
    height: 35px;
    padding: 0 1px 0 0;
    background: #fff;
    font-family: "Liberation Sans", sans-serif;
    font-size: 20px;
    line-height: 36px;
}

.lamp {
    display: flex;
    justify-content: flex-end;
    width: 30px;
    height: 21px;
    background: radial-gradient(circle at 18px 10px, #70c828 7px, #c0c0c0 8px, #c0c0c0 9px, transparent 10px);
    font-size: 24px;
    line-height: 23px;
}

.key {
    display: flex;
    align-items: center;
    justify-content: center;
    height: 43px;
    border: solid;
    border-width: 4px 11px 4px 10px;
    border-color: #d0d0d0 #bcbcbc #b4b4b4 #c4c4c4;
    border-radius: 4px;
    background: #54a6d0;
    box-shadow: inset 2px 2px #8cc4e0, inset -4px -3px #3f88b0;
    font-size: 27px;
}

.page-key {
    z-index: 0;
    display: flex;
    align-items: center;
    justify-content: center;
    width: 135px;
    height: 51px;
    padding-bottom: 6px;
    border: 5px solid #d0d0d4;
    border-width: 5px 11px;
    border-radius: 6px;
    outline: 2px solid #fff;
    outline-offset: -2px;
    background: #54a0ff;
    box-shadow: inset 5px 3px #1c70e0, inset -6px -2px #3c84e8;
    font-size: 42px;
}

.page-key::before {
    content: "";
    position: absolute;
    z-index: -1;
    left: 28px;
    top: 12px;
    width: 58px;
    height: 16px;
    background: #fff;
    clip-path: polygon(0 0, 100% 0, 50% 100%);
}
```
